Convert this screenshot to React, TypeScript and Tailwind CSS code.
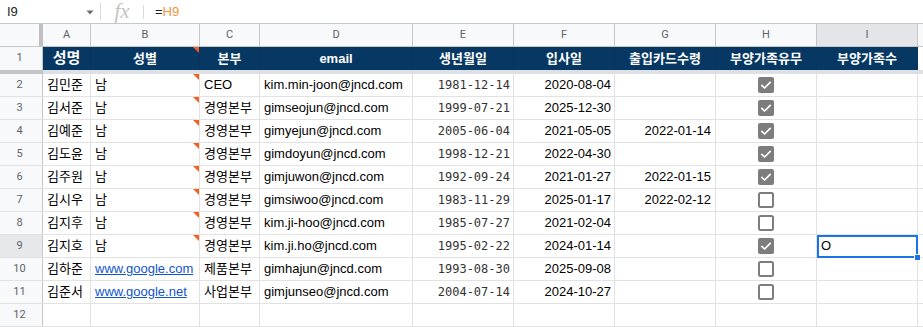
import React from "react";

const W = [
  "w-[48px]",
  "w-[109px]",
  "w-[60px]",
  "w-[153px]",
  "w-[101px]",
  "w-[101px]",
  "w-[101px]",
  "w-[101px]",
  "w-[101px]",
];

const LETTERS = ["A", "B", "C", "D", "E", "F", "G", "H", "I"];
const HEADERS = ["성명", "성별", "본부", "email", "생년월일", "입사일", "출입카드수령", "부양가족유무", "부양가족수"];

type Row = [string, string, string, string, string, string, string, boolean | null, string];

const DATA: Row[] = [
  ["김민준", "남", "CEO", "kim.min-joon@jncd.com", "1981-12-14", "2020-08-04", "", true, ""],
  ["김서준", "남", "경영본부", "gimseojun@jncd.com", "1999-07-21", "2025-12-30", "", true, ""],
  ["김예준", "남", "경영본부", "gimyejun@jncd.com", "2005-06-04", "2021-05-05", "2022-01-14", true, ""],
  ["김도윤", "남", "경영본부", "gimdoyun@jncd.com", "1998-12-21", "2022-04-30", "", true, ""],
  ["김주원", "남", "경영본부", "gimjuwon@jncd.com", "1992-09-24", "2021-01-27", "2022-01-15", true, ""],
  ["김시우", "남", "경영본부", "gimsiwoo@jncd.com", "1983-11-29", "2025-01-17", "2022-02-12", false, ""],
  ["김지후", "남", "경영본부", "kim.ji-hoo@jncd.com", "1985-07-27", "2021-02-04", "", false, ""],
  ["김지호", "남", "경영본부", "kim.ji.ho@jncd.com", "1995-02-22", "2024-01-14", "", true, "O"],
  ["김하준", "www.google.com", "제품본부", "gimhajun@jncd.com", "1993-08-30", "2025-09-08", "", false, ""],
  ["김준서", "www.google.net", "사업본부", "gimjunseo@jncd.com", "2004-07-14", "2024-10-27", "", false, ""],
];

const FONT = { fontFamily: '"Liberation Sans", "Noto Sans CJK KR", Arial, sans-serif' };

function Triangle() {
  return (
    <div className="absolute top-0 right-0 w-0 h-0 border-t-[6px] border-t-[#f4601e] border-l-[6px] border-l-transparent" />
  );
}

function Checkbox({ checked }: { checked: boolean }) {
  return checked ? (
    <svg width="16" height="16" viewBox="0 0 16 16">
      <rect x="0" y="0" width="16" height="16" rx="2" fill="#7d7d7d" />
      <path d="M3.8 8.3 L6.6 11 L12.2 5.4" stroke="#fff" strokeWidth="1.7" fill="none" strokeLinecap="round" strokeLinejoin="round" />
    </svg>
  ) : (
    <svg width="16" height="16" viewBox="0 0 16 16">
      <rect x="1" y="1" width="14" height="14" rx="1.5" fill="#fff" stroke="#7d7d7d" strokeWidth="2" />
    </svg>
  );
}

export default function App() {
  const cellBase = "h-full shrink-0 border-r border-[#e2e2e2] flex items-center whitespace-nowrap relative";
  return (
    <div className="w-[923px] h-[327px] overflow-hidden bg-white text-black text-[13px]" style={FONT}>
      {/* formula bar */}
      <div className="flex items-center h-[24px] border-b border-[#c7c7c7]">
        <div className="w-[100px] h-full flex items-center pl-[7px] pr-[6px] justify-between">
          <span className="text-[13px] text-[#202124]">I9</span>
          <svg width="8" height="5" viewBox="0 0 8 5" className="mt-[1px]">
            <path d="M0.5 0.5 L7.5 0.5 L4 4.5 Z" fill="#6b6b6b" />
          </svg>
        </div>
        <div className="w-px h-[17px] bg-[#dadada]" />
        <div className="w-[42px] h-full flex items-center justify-center">
          <span
            className="text-[21px] italic text-[#c4c4c4] leading-none"
            style={{ fontFamily: '"Liberation Serif", "DejaVu Serif", serif' }}
          >
            fx
          </span>
        </div>
        <div className="w-px h-[14px] bg-[#dadada]" />
        <div className="pl-[11px] text-[13px]">
          <span className="text-[#202124]">=</span>
          <span className="text-[#f6923b]">H9</span>
        </div>
      </div>

      {/* column letters */}
      <div className="flex h-[23px] border-b border-[#c7c7c7] bg-[#f8f9fa]">
        <div className="w-[39px] shrink-0 h-full" />
        <div className="w-[4px] shrink-0 h-full bg-[#c0c0c0]" />
        {LETTERS.map((l, i) => (
          <div
            key={l}
            className={`${W[i]} shrink-0 h-full border-r border-[#c7c7c7] flex items-center justify-center text-[11px] text-[#5f6368] ${
              l === "I" ? "bg-[#e3e5e8]" : ""
            }`}
            style={{ fontFamily: 'Roboto, "Liberation Sans", sans-serif' }}
          >
            {l}
          </div>
        ))}
        <div className="flex-1 h-full" />
      </div>

      {/* header row 1 */}
      <div className="flex h-[23px]">
        <div
          className="w-[43px] shrink-0 h-full bg-[#f8f9fa] border-r border-[#c7c7c7] flex items-center justify-center pr-[3px] text-[11px] text-[#5f6368]"
          style={{ fontFamily: 'Roboto, "Liberation Sans", sans-serif' }}
        >
          1
        </div>
        {HEADERS.map((h, i) => (
          <div
            key={h}
            className={`${W[i]} shrink-0 h-full bg-[#073763] border-r border-[#08345c] flex items-center justify-center font-bold text-white relative ${
              i === 0 ? "text-[15px]" : "text-[13px]"
            }`}
          >
            {h}
            {i === 1 && <Triangle />}
          </div>
        ))}
        <div className="flex-1 h-full bg-white" />
      </div>

      {/* freeze band */}
      <div className="flex h-[4px]">
        <div className="w-[43px] shrink-0 h-full bg-[#c4c4c4]" />
        <div className="flex-1 h-full bg-[#dde0e4]" />
      </div>

      {/* data rows */}
      {DATA.map((r, idx) => {
        const rowNum = idx + 2;
        const selectedRow = rowNum === 9;
        return (
          <div key={rowNum} className="flex h-[23px] border-b border-[#e2e2e2]">
            <div
              className={`w-[43px] shrink-0 h-full border-r border-[#c7c7c7] flex items-center justify-center pr-[3px] text-[11px] text-[#5f6368] ${
                selectedRow ? "bg-[#e6e8eb]" : "bg-[#f8f9fa]"
              }`}
              style={{ fontFamily: 'Roboto, "Liberation Sans", sans-serif' }}
            >
              {rowNum}
            </div>
            <div className={`${W[0]} ${cellBase} pl-[4px] overflow-hidden`}>{r[0]}</div>
            <div className={`${W[1]} ${cellBase} pl-[4px]`}>
              {r[1].startsWith("www") ? (
                <span className="text-[#1155cc] underline">{r[1]}</span>
              ) : (
                r[1]
              )}
              {rowNum <= 9 && <Triangle />}
            </div>
            <div className={`${W[2]} ${cellBase} pl-[4px] overflow-hidden`}>{r[2]}</div>
            <div className={`${W[3]} ${cellBase} pl-[4px] overflow-hidden`}>{r[3]}</div>
            <div
              className={`${W[4]} ${cellBase} justify-end pr-[3px] text-[12px] text-[#333]`}
              style={{ fontFamily: '"DejaVu Sans Mono", "Liberation Mono", monospace' }}
            >
              {r[4]}
            </div>
            <div className={`${W[5]} ${cellBase} justify-end pr-[3px]`}>{r[5]}</div>
            <div className={`${W[6]} ${cellBase} justify-end pr-[4px]`}>{r[6]}</div>
            <div className={`${W[7]} ${cellBase} justify-center`}>
              {r[7] !== null && <Checkbox checked={r[7] as boolean} />}
            </div>
            <div className={`${W[8]} ${cellBase} pl-[4px] ${selectedRow ? "z-10" : ""}`}>
              {r[8]}
              {selectedRow && (
                <>
                  <div className="absolute left-0 top-0 w-[101px] h-[23px] border-2 border-[#1a73e8]" />
                  <div className="absolute right-[-4px] bottom-[-4px] w-[7px] h-[7px] bg-[#1a73e8] border border-white" />
                </>
              )}
            </div>
            <div className="flex-1 h-full" />
          </div>
        );
      })}

      {/* row 12 */}
      <div className="flex h-[23px] border-b border-[#e2e2e2]">
        <div
          className="w-[43px] shrink-0 h-full bg-[#f8f9fa] border-r border-[#c7c7c7] flex items-center justify-center pr-[3px] text-[11px] text-[#5f6368]"
          style={{ fontFamily: 'Roboto, "Liberation Sans", sans-serif' }}
        >
          12
        </div>
        {W.map((w, i) => (
          <div key={i} className={`${w} ${cellBase}`} />
        ))}
        <div className="flex-1 h-full" />
      </div>
    </div>
  );
}
